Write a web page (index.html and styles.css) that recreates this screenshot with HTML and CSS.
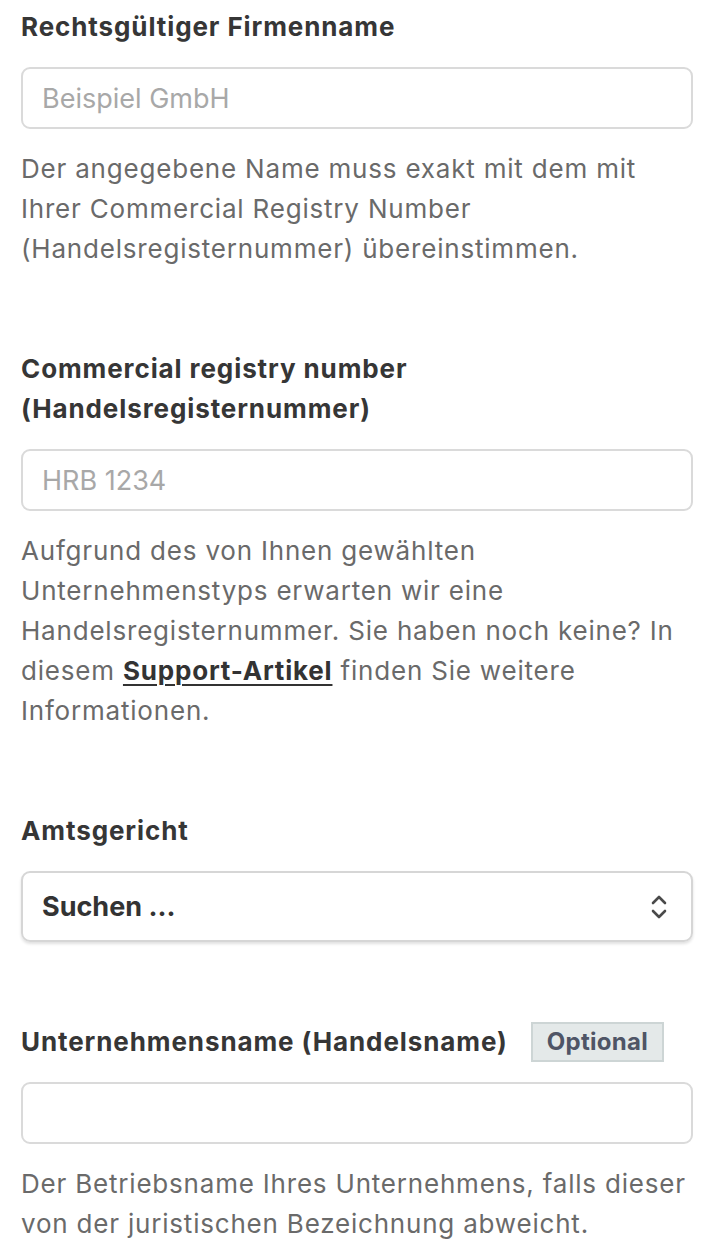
FILE: index.html
```html
<!DOCTYPE html>
<html lang="de">
<head>
    <meta charset="UTF-8">
    <meta name="viewport" content="width=device-width, initial-scale=1.0">
    <title>Unternehmensdaten</title>
    <link rel="stylesheet" href="styles.css">
</head>
<body>
    <form class="company-form">
        <!-- Legal name -->
        <div class="field">
            <label class="field-label" for="legal-name">Rechtsgültiger Firmenname</label>
            <input class="text-input" id="legal-name" type="text" placeholder="Beispiel GmbH">
            <p class="help-text">Der angegebene Name muss exakt mit dem mit Ihrer Commercial Registry Number (Handelsregisternummer) übereinstimmen.</p>
        </div>

        <!-- Registry number -->
        <div class="field">
            <label class="field-label" for="registry-number">Commercial registry number<br>(Handelsregisternummer)</label>
            <input class="text-input" id="registry-number" type="text" placeholder="HRB 1234">
            <p class="help-text">Aufgrund des von Ihnen gewählten Unternehmenstyps erwarten wir eine Handelsregisternummer. Sie haben noch keine? In diesem <a href="#">Support-Artikel</a> finden Sie weitere Informationen.</p>
        </div>

        <!-- Court -->
        <div class="field">
            <label class="field-label" for="court">Amtsgericht</label>
            <div class="select-box" id="court">
                <span class="select-value">Suchen ...</span>
                <svg class="select-icon" width="20" height="28" viewBox="0 0 20 28" fill="none" stroke="#4a4a4a" stroke-width="2.6" stroke-linecap="round" stroke-linejoin="round">
                    <polyline points="4,10 10,4 16,10"></polyline>
                    <polyline points="4,18 10,24 16,18"></polyline>
                </svg>
            </div>
        </div>

        <!-- Trading name -->
        <div class="field">
            <div class="label-row">
                <label class="field-label" for="trade-name">Unternehmensname (Handelsname)</label>
                <span class="badge">Optional</span>
            </div>
            <input class="text-input" id="trade-name" type="text">
            <p class="help-text">Der Betriebsname Ihres Unternehmens, falls dieser von der juristischen Bezeichnung abweicht.</p>
        </div>
    </form>
</body>
</html>
```

FILE: styles.css
```css
/* page */
body {
    margin: 0;
    background: #fff;
    font-family: Inter, Roboto, "Liberation Sans", Arial, sans-serif;
    color: #333;
}

.company-form {
    padding: 7px 19px 0 21px;
}

.field {
    margin-bottom: 80px;
}

.field:last-child {
    margin-bottom: 0;
}

.field-label {
    display: block;
    font-size: 26px;
    line-height: 40px;
    font-weight: 700;
    letter-spacing: 0.9px;
    color: #363636;
    margin-bottom: 20px;
}

.label-row {
    display: flex;
    align-items: center;
    gap: 23px;
    margin-bottom: 20px;
}

.label-row .field-label {
    margin-bottom: 0;
}

.badge {
    display: inline-block;
    box-sizing: border-box;
    height: 40px;
    background: #e4e9e9;
    border: 2px solid #cdd5d5;
    color: #4f5566;
    font-size: 24px;
    font-weight: 700;
    letter-spacing: 0.3px;
    line-height: 36px;
    padding: 0 14px;
}

.text-input {
    display: block;
    box-sizing: border-box;
    width: 100%;
    height: 62px;
    border: 2px solid #dadada;
    border-radius: 9px;
    padding: 0 19px;
    font-family: inherit;
    font-size: 27px;
    color: #333;
    background: #fff;
    outline: none;
}

.text-input::placeholder {
    color: #a8a8a8;
}

.help-text {
    margin: 20px 0 0;
    font-size: 26px;
    line-height: 40px;
    letter-spacing: 0.8px;
    color: #6a6a6a;
}

.help-text a {
    color: #333;
    font-weight: 700;
    text-decoration: underline;
    text-underline-offset: 4px;
    text-decoration-thickness: 2px;
}

/* select */
.select-box {
    display: flex;
    align-items: center;
    justify-content: space-between;
    box-sizing: border-box;
    height: 71px;
    border: 2px solid #d6d6d6;
    border-radius: 9px;
    padding: 0 22px 0 19px;
    box-shadow: 0 2px 3px rgba(0, 0, 0, 0.12);
}

.select-value {
    font-size: 27px;
    font-weight: 700;
    color: #333;
}

.select-icon {
    display: block;
}
```
